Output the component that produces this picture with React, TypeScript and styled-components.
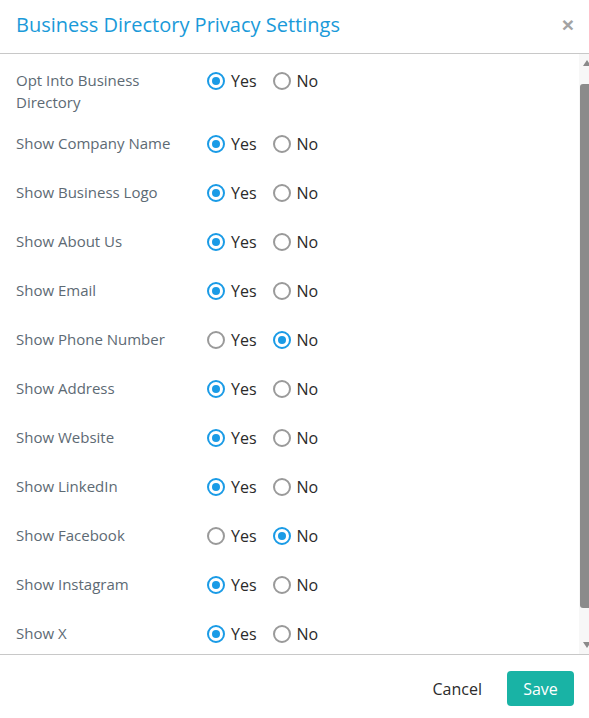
import React, { useState } from "react";
import styled, { createGlobalStyle } from "styled-components";

const GlobalStyle = createGlobalStyle`
  html, body {
    margin: 0;
    padding: 0;
    background: #ffffff;
    overflow: hidden;
  }
  body {
    font-family: "Open Sans", "Liberation Sans", sans-serif;
  }
`;

const Modal = styled.div`
  width: 594px;
  height: 718px;
  display: flex;
  flex-direction: column;
  background: #fff;
`;

const Header = styled.div`
  height: 53px;
  display: flex;
  align-items: center;
  justify-content: space-between;
  padding: 0 20px 0 16px;
  border-bottom: 1px solid #c8c8c8;
  box-sizing: content-box;
`;

const Title = styled.h4`
  margin: 0;
  font-size: 20px;
  font-weight: 400;
  color: #1a9ad9;
  line-height: 26px;
  margin-top: -3px;
`;

const Close = styled.button`
  border: 0;
  background: none;
  padding: 0;
  font-family: "Liberation Sans", sans-serif;
  font-size: 21px;
  font-weight: 700;
  color: #a3a3a3;
  line-height: 1;
  margin-top: -5px;
  cursor: pointer;
`;

const BodyWrap = styled.div`
  height: 600px;
  display: flex;
`;

const Body = styled.div`
  flex: 1;
  overflow: hidden;
  padding: 15px 0 0 16px;
`;

const ScrollTrack = styled.div`
  width: 15px;
  display: flex;
  flex-direction: column;
  align-items: center;
  background: #f7f7f7;
  padding: 6px 0;
  box-sizing: border-box;
`;

const Arrow = styled.div<{ $down?: boolean }>`
  width: 0;
  height: 0;
  border-left: 4px solid transparent;
  border-right: 4px solid transparent;
  ${(p) =>
    p.$down
      ? "border-top: 6px solid #8a8a8a;"
      : "border-bottom: 6px solid #8a8a8a;"}
`;

const ThumbArea = styled.div`
  flex: 1;
  width: 100%;
  display: flex;
  padding: 18px 0 34px;
  box-sizing: border-box;
`;

const Thumb = styled.div`
  flex: 1;
  margin: 0 1px;
  background: #8b8b8b;
  border-radius: 3px;
`;

const Row = styled.div`
  display: grid;
  grid-template-columns: 191px 1fr;
  align-items: start;
  min-height: 30px;
  margin-bottom: 19px;
`;

const Label = styled.div`
  font-size: 15px;
  line-height: 22px;
  color: #5d6a74;
  padding-right: 20px;
`;

const Options = styled.div`
  display: flex;
  align-items: center;
  height: 22px;
  margin-top: 1px;
`;

const Option = styled.label`
  display: flex;
  align-items: center;
  gap: 6px;
  margin-right: 16px;
  font-size: 16px;
  line-height: 22px;
  color: #2a2a2a;
  cursor: pointer;
`;

const Radio = styled.input.attrs({ type: "radio" })`
  appearance: none;
  -webkit-appearance: none;
  margin: 0;
  width: 18px;
  height: 18px;
  border-radius: 50%;
  border: 2px solid #9a9a9a;
  box-sizing: border-box;
  display: grid;
  place-items: center;
  cursor: pointer;

  &:checked {
    border-color: #1a9be6;
  }
  &:checked::after {
    content: "";
    width: 8px;
    height: 8px;
    border-radius: 50%;
    background: #1a9be6;
  }
`;

const Footer = styled.div`
  flex: 1;
  display: flex;
  align-items: center;
  justify-content: flex-end;
  gap: 25px;
  padding: 4px 20px 0 0;
  border-top: 1px solid #c8c8c8;
`;

const CancelButton = styled.button`
  border: 0;
  background: none;
  padding: 0;
  font-family: inherit;
  font-size: 16px;
  color: #2b2b2b;
  cursor: pointer;
`;

const SaveButton = styled.button`
  width: 67px;
  height: 35px;
  border: 0;
  border-radius: 4px;
  background: #19b3a5;
  color: #fff;
  font-family: inherit;
  font-size: 16px;
  cursor: pointer;
`;

const settings: { label: string; value: boolean }[] = [
  { label: "Opt Into Business Directory", value: true },
  { label: "Show Company Name", value: true },
  { label: "Show Business Logo", value: true },
  { label: "Show About Us", value: true },
  { label: "Show Email", value: true },
  { label: "Show Phone Number", value: false },
  { label: "Show Address", value: true },
  { label: "Show Website", value: true },
  { label: "Show LinkedIn", value: true },
  { label: "Show Facebook", value: false },
  { label: "Show Instagram", value: true },
  { label: "Show X", value: true },
];

const App = () => {
  const [values, setValues] = useState(settings.map((s) => s.value));

  const setValue = (i: number, v: boolean) => {
    setValues((prev) => prev.map((p, j) => (j === i ? v : p)));
  };

  return (
    <>
      <GlobalStyle />
      <Modal>
        <Header>
          <Title>Business Directory Privacy Settings</Title>
          <Close aria-label="Close">×</Close>
        </Header>
        <BodyWrap>
          <Body>
            {settings.map((s, i) => (
              <Row key={s.label}>
                <Label>
                  {i === 0 ? (
                    <>
                      Opt Into Business
                      <br />
                      Directory
                    </>
                  ) : (
                    s.label
                  )}
                </Label>
                <Options>
                  <Option>
                    <Radio name={"r" + i} checked={values[i]} onChange={() => setValue(i, true)} />
                    Yes
                  </Option>
                  <Option>
                    <Radio name={"r" + i} checked={!values[i]} onChange={() => setValue(i, false)} />
                    No
                  </Option>
                </Options>
              </Row>
            ))}
          </Body>
          <ScrollTrack>
            <Arrow />
            <ThumbArea>
              <Thumb />
            </ThumbArea>
            <Arrow $down />
          </ScrollTrack>
        </BodyWrap>
        <Footer>
          <CancelButton>Cancel</CancelButton>
          <SaveButton>Save</SaveButton>
        </Footer>
      </Modal>
    </>
  );
};

export default App;
